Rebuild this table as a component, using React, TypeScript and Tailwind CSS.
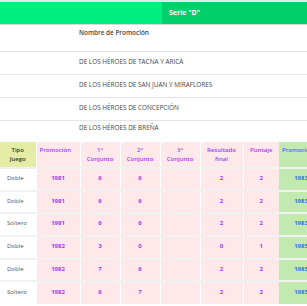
import React from "react"

const rows = [
  { tipo: "Doble", promo: "1981", c1: "6", c2: "6", c3: "", res: "2", pts: "2", promo2: "1983" },
  { tipo: "Doble", promo: "1981", c1: "6", c2: "6", c3: "", res: "2", pts: "2", promo2: "1983" },
  { tipo: "Soltero", promo: "1981", c1: "6", c2: "6", c3: "", res: "2", pts: "2", promo2: "1983" },
  { tipo: "Doble", promo: "1982", c1: "3", c2: "0", c3: "", res: "0", pts: "1", promo2: "1985" },
  { tipo: "Doble", promo: "1982", c1: "7", c2: "6", c3: "", res: "2", pts: "2", promo2: "1985" },
  { tipo: "Soltero", promo: "1982", c1: "6", c2: "7", c3: "", res: "2", pts: "2", promo2: "1985" },
]

const promociones = [
  "DE LOS HÉROES DE TACNA Y ARICA",
  "DE LOS HÉROES DE SAN JUAN Y MIRAFLORES",
  "DE LOS HÉROES DE CONCEPCIÓN",
]

export default function App() {
  return (
    <div className="w-[307px] h-[306px] overflow-hidden bg-white font-['Open_Sans',sans-serif]">
      <div className="h-[2px] bg-[#e6e6e6]" />
      <div className="flex h-[23px] border-b border-[#d8d8d8]">
        <div className="w-[162px] bg-[#00ef80]" />
        <div className="flex-1 flex items-center pl-[7px] bg-[#00d06c] text-white font-bold text-[7px]">
          Serie "D"
        </div>
      </div>

      <div className="text-[6.4px] text-[#444]">
        <div className="h-[26px] pl-[79px] pt-[3px] font-semibold">Nombre de Promoción</div>
        {promociones.map((p) => (
          <div key={p} className="h-[23px] pl-[79px] pt-[5px] border-t border-[#e4e4e4]">
            {p}
          </div>
        ))}
        <div className="h-[22px] pl-[79px] pt-[2px] border-t border-[#e4e4e4]">DE LOS HÉROES DE BREÑA</div>
      </div>

      <table className="table-fixed border-collapse w-[323px] text-[6px]">
        <colgroup>
          <col className="w-[36px]" />
          <col className="w-[44px]" />
          <col className="w-[40px]" />
          <col className="w-[40px]" />
          <col className="w-[40px]" />
          <col className="w-[43px]" />
          <col className="w-[36px]" />
          <col className="w-[44px]" />
        </colgroup>
        <thead>
          <tr className="h-[26px] align-top font-bold">
            <th className="bg-[#e4eca6] text-[#333] pt-[4px] leading-[9px] text-center font-semibold">
              Tipo
              <br />
              Juego
            </th>
            <th className="bg-[#ffe8ea] text-[#a040f0] pt-[4px] pl-[3px] text-left font-semibold border-l border-white">Promoción</th>
            <th className="bg-[#ffe8ea] text-[#a040f0] pt-[4px] leading-[9px] font-semibold border-l border-white">
              1°
              <br />
              Conjunto
            </th>
            <th className="bg-[#ffe8ea] text-[#a040f0] pt-[4px] leading-[9px] font-semibold border-l border-white">
              2°
              <br />
              Conjunto
            </th>
            <th className="bg-[#ffe8ea] text-[#a040f0] pt-[4px] leading-[9px] font-semibold border-l border-white">
              3°
              <br />
              Conjunto
            </th>
            <th className="bg-[#ffe8ea] text-[#a040f0] pt-[4px] leading-[9px] font-semibold border-l border-white">
              Resultado
              <br />
              final
            </th>
            <th className="bg-[#ffe8ea] text-[#a040f0] pt-[4px] font-semibold border-l border-white">Puntaje</th>
            <th className="bg-[#c2eab0] text-[#3a6ee8] pt-[4px] pl-[3px] text-left font-semibold">Promoción</th>
          </tr>
        </thead>
        <tbody>
          {rows.map((r, i) => (
            <tr key={i} className="h-[22.7px] border-t-2 border-[#f1f1f1]">
              <td className="bg-white text-[#555] pl-[7px] pb-[2px]">{r.tipo}</td>
              <td className="bg-[#ffe8ea] text-[#9b3ff0] font-bold text-center pb-[2px] border-l border-white">{r.promo}</td>
              <td className="bg-[#ffe8ea] text-[#9b3ff0] font-bold text-center pb-[2px] border-l border-white">{r.c1}</td>
              <td className="bg-[#ffe8ea] text-[#9b3ff0] font-bold text-center pb-[2px] border-l border-white">{r.c2}</td>
              <td className="bg-[#ffe8ea] text-[#9b3ff0] font-bold text-center pb-[2px] border-l border-white">{r.c3}</td>
              <td className="bg-[#ffe8ea] text-[#9b3ff0] font-bold text-center pb-[2px] border-l border-white">{r.res}</td>
              <td className="bg-[#ffe8ea] text-[#9b3ff0] font-bold text-center pb-[2px] border-l border-white">{r.pts}</td>
              <td className="bg-[#c2eab0] text-[#3a6ee8] font-bold text-center pb-[2px]">{r.promo2}</td>
            </tr>
          ))}
        </tbody>
      </table>
    </div>
  )
}
